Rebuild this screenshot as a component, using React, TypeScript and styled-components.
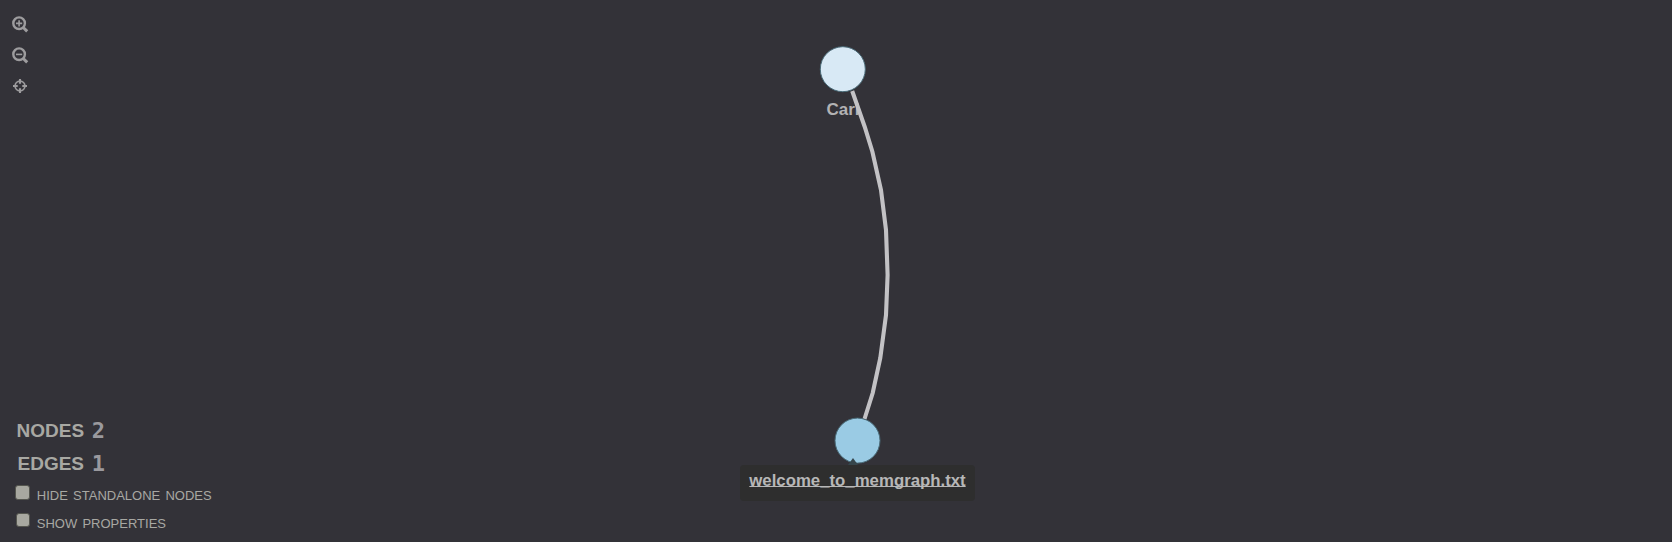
import React from "react";
import styled, { createGlobalStyle } from "styled-components";

const GlobalStyle = createGlobalStyle`
  * { box-sizing: border-box; }
  body { margin: 0; background: #333238; }
`;

const Viewer = styled.main`
  position: relative;
  display: flex;
  flex-direction: column;
  justify-content: space-between;
  width: 100%;
  height: 542px;
  overflow: hidden;
  background: #333238;
  color: #a8a8a3;
  font-family: "Liberation Sans", Arial, sans-serif;
`;

const Toolbar = styled.nav`
  display: flex;
  flex-direction: column;
  gap: 15px;
  padding: 16px 0 0 12px;
`;

const ToolButton = styled.button`
  display: flex;
  width: 16px;
  height: 16px;
  padding: 0;
  border: 0;
  background: none;
  color: #9d9c9e;

  svg { overflow: visible; }
`;

const Panel = styled.section`
  display: flex;
  flex-direction: column;
  padding: 0 0 5px 15px;
`;

const Stats = styled.div`
  display: flex;
  flex-direction: column;
  padding: 0 0 1px 1px;
`;

const Stat = styled.div<{ $indent?: number }>`
  display: flex;
  align-items: center;
  justify-content: space-between;
  width: 89px;
  height: 33px;
  padding-left: ${(p) => 0.5 + (p.$indent ?? 0)}px;
  font-size: 19px;
  font-weight: 700;
`;

const Count = styled.span`
  color: #9a999e;
  font: 700 22px/33px "DejaVu Sans Mono", monospace;
`;

const Option = styled.label`
  display: flex;
  align-items: center;
  gap: 6px;
  height: 28px;
  font-size: 13px;
  word-spacing: 1.6px;
`;

const Box = styled.span<{ $size: number }>`
  width: ${(p) => p.$size}px;
  height: ${(p) => p.$size}px;
  margin: 0 0 6px ${(p) => 15 - p.$size}px;
  border: 1px solid #55564f;
  border-radius: 3px;
  background: #a8a8a0;
`;

const OptionText = styled.span`
  padding-left: 0.8px;
`;

const Graph = styled.div`
  position: absolute;
  inset: 0;
  pointer-events: none;
`;

const Node = styled.div<{ $x: number; $y: number; $fill: string }>`
  position: absolute;
  left: 0;
  top: 0;
  transform: translate(${(p) => p.$x}px, ${(p) => p.$y}px);
  width: 46px;
  height: 46px;
  border: 1px solid #4a6b78;
  border-radius: 50%;
  background: ${(p) => p.$fill};
`;

const NodeLabel = styled.span`
  position: absolute;
  left: 826.5px;
  top: 100px;
  color: #b3b2b4;
  font-size: 17px;
  font-weight: 700;
  line-height: 20px;
`;

const Edge = styled.svg`
  position: absolute;
  inset: 0;
`;

const Tooltip = styled.div`
  position: absolute;
  left: 740px;
  top: 465px;
  display: flex;
  justify-content: center;
  width: 235px;
  height: 36px;
  padding-top: 6px;
  border-radius: 4px;
  background: #2e2e2e;
  color: #b7b7b7;
  font-size: 16.8px;
  font-weight: 700;
  line-height: 20px;
  text-decoration: underline;
  text-decoration-thickness: 1px;
  text-decoration-skip-ink: none;
  text-underline-offset: 0px;

  &::before {
    content: "";
    position: absolute;
    left: 108px;
    top: -7px;
    border: solid transparent;
    border-width: 0 5px 7px;
    border-bottom-color: #36454b;
  }
`;

const Magnifier = ({ plus = false }: { plus?: boolean }) => (
  <svg width="16" height="16" viewBox="0 0 16 16" fill="none" stroke="currentColor">
    <circle cx="7.1" cy="7.2" r="5.8" strokeWidth="2.4" />
    <path d="M11 11.2L15.2 15.4" strokeWidth="3" />
    <path d={plus ? "M4 7.4H10.2M7.1 4.3V10.5" : "M4 7.4H10.2"} strokeWidth="1.6" />
  </svg>
);

const Crosshair = () => (
  <svg width="16" height="16" viewBox="0 0 16 16" fill="none" stroke="currentColor">
    <circle cx="8" cy="8" r="4.9" strokeWidth="1.7" />
    <path d="M8 1V5.7M8 10.3V15M1 8H5.7M10.3 8H15" strokeWidth="2.1" />
  </svg>
);

export default function App() {
  return (
    <>
      <GlobalStyle />
      <Viewer>
        <Toolbar>
          <ToolButton aria-label="Zoom in"><Magnifier plus /></ToolButton>
          <ToolButton aria-label="Zoom out"><Magnifier /></ToolButton>
          <ToolButton aria-label="Center graph"><Crosshair /></ToolButton>
        </Toolbar>
        <Panel>
          <Stats>
            <Stat>NODES<Count>2</Count></Stat>
            <Stat $indent={1}>EDGES<Count>1</Count></Stat>
          </Stats>
          <Option><Box $size={15} /><OptionText>HIDE STANDALONE NODES</OptionText></Option>
          <Option><Box $size={14} /><OptionText>SHOW PROPERTIES</OptionText></Option>
        </Panel>
        <Graph>
          <NodeLabel>Carl</NodeLabel>
          <Edge width="1672" height="542" fill="none">
            <path
              d="M852.2 91L864.7 126.7L872.4 151.7L881 190L886 230L887.6 275L886 315L880.3 358L872.7 393L864.5 419"
              stroke="#c3c2c5"
              strokeWidth="4.1"
            />
          </Edge>
          <Node $x={819.8} $y={46.2} $fill="#d8e9f5" />
          <Node $x={834.5} $y={417.6} $fill="#9acbe4" />
          <Tooltip>welcome_to_memgraph.txt</Tooltip>
        </Graph>
      </Viewer>
    </>
  );
}
